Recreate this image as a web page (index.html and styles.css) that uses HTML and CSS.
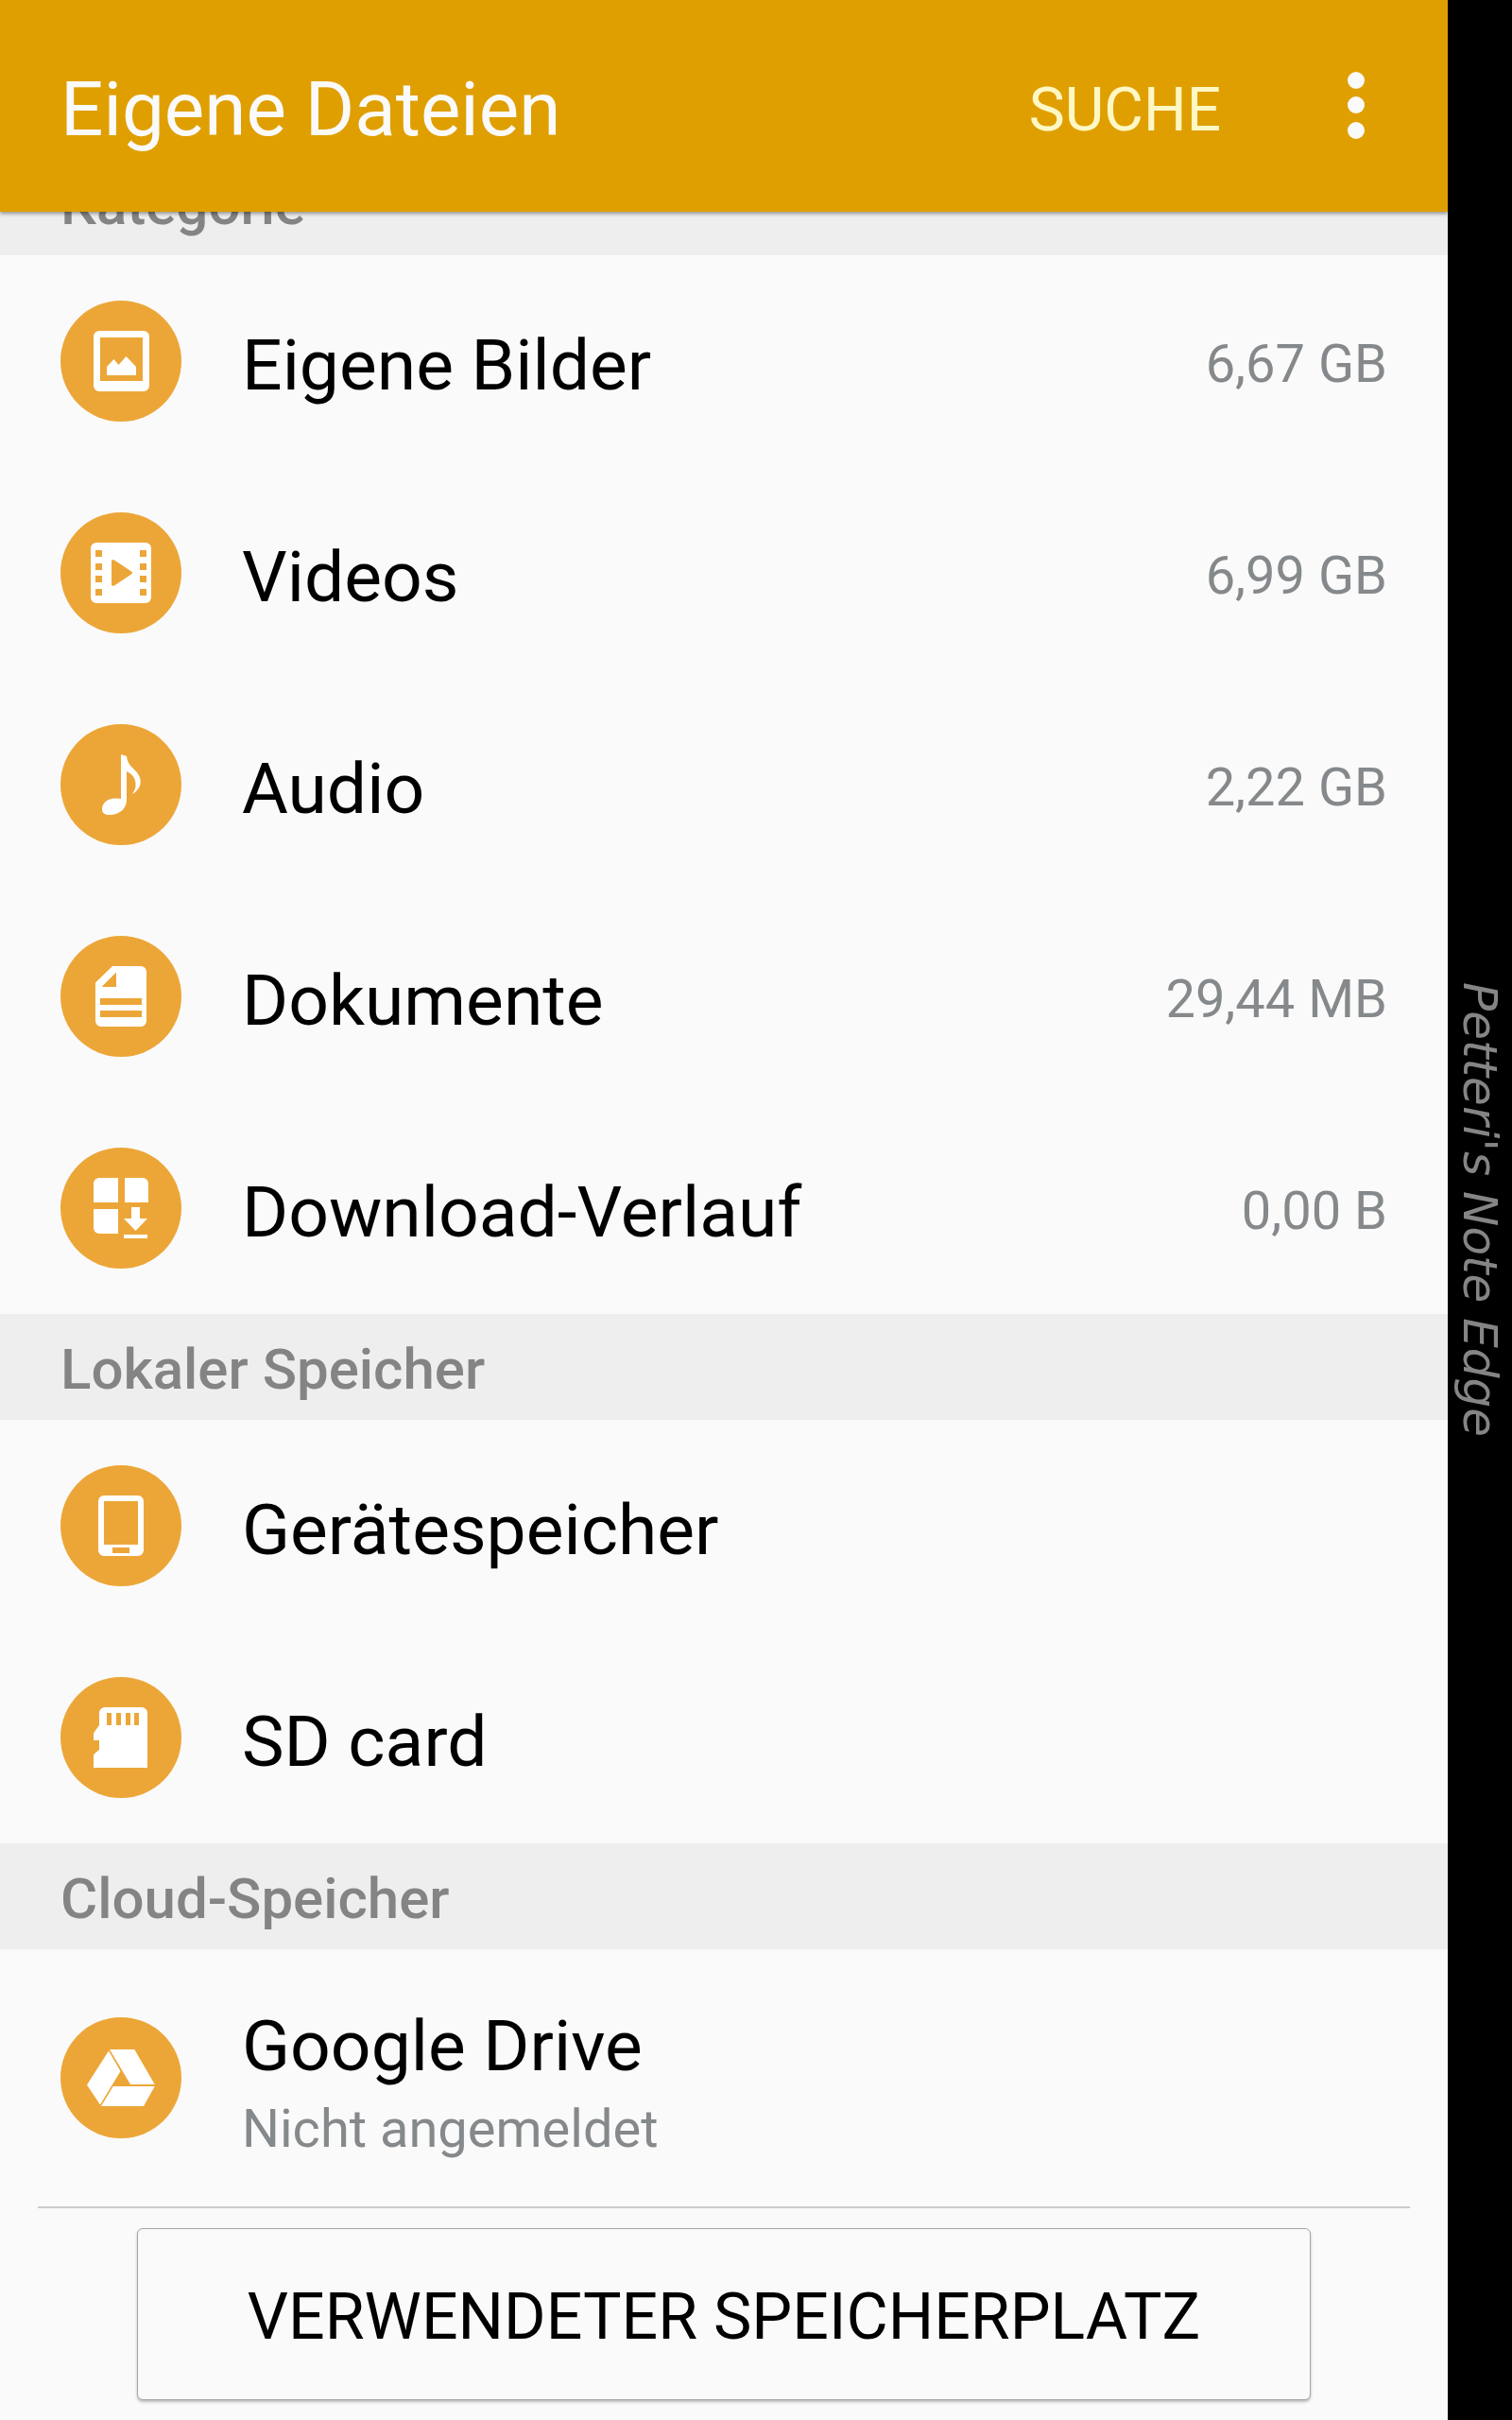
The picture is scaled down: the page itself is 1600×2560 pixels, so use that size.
FILE: index.html
```html
<!DOCTYPE html>
<html lang="de">
<head>
    <meta charset="UTF-8">
    <meta name="viewport" content="width=device-width, initial-scale=1.0">
    <title>Eigene Dateien</title>
    <link rel="stylesheet" href="styles.css">
</head>
<body>
    <div class="app">
        <header class="app-bar">
            <h1>Eigene Dateien</h1>
            <button class="search-btn" type="button">SUCHE</button>
            <button class="menu-btn" type="button" aria-label="Weitere Optionen">
                <svg width="18" height="80" viewBox="0 0 18 80" fill="#fafafa">
                    <circle cx="9" cy="9" r="9"/>
                    <circle cx="9" cy="35" r="9"/>
                    <circle cx="9" cy="62" r="9"/>
                </svg>
            </button>
        </header>

        <main>
            <section class="first-section">
                <h2>Kategorie</h2>
                <a class="row" href="#bilder">
                    <svg class="icon" viewBox="0 0 128 128">
                        <path fill-rule="evenodd" d="M41 32H88a6 6 0 0 1 6 6V90a6 6 0 0 1-6 6H41a6 6 0 0 1-6-6V38a6 6 0 0 1 6-6zM42 39V85H87V39z"/>
                        <path d="M49 79V70L56.500 62L61.500 68L69.500 59L80 70V79z"/>
                    </svg>
                    <span class="name">Eigene Bilder</span>
                    <span class="size">6,67 GB</span>
                </a>
                <a class="row" href="#videos">
                    <svg class="icon" viewBox="0 0 128 128">
                        <path fill-rule="evenodd" d="M38 32H90a6 6 0 0 1 6 6V90a6 6 0 0 1-6 6H38a6 6 0 0 1-6-6V38a6 6 0 0 1 6-6zM37 40v7h7v-7zM37 54v7h7v-7zM37 67v7h7v-7zM37 81v7h7v-7zM84 40v7h7v-7zM84 54v7h7v-7zM84 67v7h7v-7zM84 81v7h7v-7zM54 51.500V76.500Q54.500 78.500 57 77.500L75 65.500Q77 64 75 62.500L57 50.500Q54.500 49 54 51.500z"/>
                    </svg>
                    <span class="name">Videos</span>
                    <span class="size">6,99 GB</span>
                </a>
                <a class="row" href="#audio">
                    <svg class="icon" viewBox="0 0 128 128">
                        <path d="M64 32L70 34C70.500 39 72.500 43 76.500 46.500C83 52.500 84.500 56 84.700 61C84.700 67 81 71 75.500 74.500C79 70 79.800 67 79.500 62.500C79 56 75 52.500 70 50V80C70 89 63 96 52 96C47 96 44 94 44 90C44 83 51 76.500 64 79z"/>
                    </svg>
                    <span class="name">Audio</span>
                    <span class="size">2,22 GB</span>
                </a>
                <a class="row" href="#dokumente">
                    <svg class="icon" viewBox="0 0 128 128">
                        <path fill-rule="evenodd" d="M55 32H85a6 6 0 0 1 6 6V90a6 6 0 0 1-6 6H43a6 6 0 0 1-6-6V49.500zM59 38.500L43.500 54H59zM42 66V73H86V66zM42 79V86H86V79z"/>
                    </svg>
                    <span class="name">Dokumente</span>
                    <span class="size">29,44 MB</span>
                </a>
                <a class="row" href="#download">
                    <svg class="icon" viewBox="0 0 128 128">
                        <path d="M41 32H61V58H35V38a6 6 0 0 1 6-6zM68 32H87a6 6 0 0 1 6 6V58H68zM35 65H61V91H41a6 6 0 0 1-6-6z"/>
                        <path d="M75 63H84V75H92L79.500 88L67 75H75zM67 92H92V96H67z"/>
                    </svg>
                    <span class="name">Download-Verlauf</span>
                    <span class="size">0,00 B</span>
                </a>
            </section>

            <section>
                <h2>Lokaler Speicher</h2>
                <a class="row" href="#geraet">
                    <svg class="icon" viewBox="0 0 128 128">
                        <path fill-rule="evenodd" d="M46 32H82a6 6 0 0 1 6 6V90a6 6 0 0 1-6 6H46a6 6 0 0 1-6-6V38a6 6 0 0 1 6-6zM46 38V84H82V38zM55 87V93H73V87z"/>
                    </svg>
                    <span class="name">Gerätespeicher</span>
                </a>
                <a class="row" href="#sdcard">
                    <svg class="icon" viewBox="0 0 128 128">
                        <path fill-rule="evenodd" d="M47 32H86a6 6 0 0 1 6 6V96H35V82L41 77V67H35V59.500L41 51V38a6 6 0 0 1 6-6zM49 38v13h5v-13zM59 38v13h5v-13zM69 38v13h5v-13zM78 38v13h5v-13z"/>
                    </svg>
                    <span class="name">SD card</span>
                </a>
            </section>

            <section>
                <h2>Cloud-Speicher</h2>
                <a class="row row-tall" href="#drive">
                    <svg class="icon" viewBox="0 0 128 128">
                        <path d="M51 35.500L63.500 57L42 92.500L28 71.500zM52 34H78.300L99.700 71H74zM55.700 73H99.700L88 94H43z"/>
                    </svg>
                    <span class="name">Google Drive <small>Nicht angemeldet</small></span>
                </a>
            </section>
        </main>

        <footer>
            <button class="storage-btn" type="button">VERWENDETER SPEICHERPLATZ</button>
        </footer>
    </div>

    <aside class="edge">Petteri's Note Edge</aside>
</body>
</html>
```
FILE: styles.css
```css
* {
    box-sizing: border-box;
}

body {
    display: flex;
    min-height: 100vh;
    margin: 0;
    background-color: #000;
    font-family: Roboto, "Noto Sans", sans-serif;
}

button {
    padding: 0;
    border: none;
    background: none;
    font-family: inherit;
    cursor: pointer;
}

.app {
    flex: 1;
    min-width: 0;
    overflow: hidden;
    background-color: #fafafa;
}

.app-bar {
    position: relative;
    z-index: 1;
    display: flex;
    align-items: center;
    height: 224px;
    padding: 8px 88px 0 64px;
    background-color: #e09f00;
    box-shadow: 0 2px 4px rgba(0, 0, 0, 0.4);
}

h1 {
    flex: 1;
    margin: 0;
    color: #fafafa;
    font-size: 80px;
    font-weight: 400;
}

.search-btn {
    color: #fff8c5;
    font-size: 64px;
}

.menu-btn {
    display: flex;
    margin-left: 134px;
}

/* list is scrolled a little under the app bar */
.first-section {
    margin-top: -66px;
}

h2 {
    height: 112px;
    margin: 0;
    padding: 6px 64px 0;
    background-color: #eeeeee;
    color: #848484;
    font-size: 60px;
    font-weight: 500;
    line-height: 106px;
}

.row {
    display: flex;
    align-items: center;
    min-height: 224px;
    padding: 0 64px;
    color: #000;
    text-decoration: none;
}

.row-tall {
    min-height: 272px;
}

.icon {
    flex: none;
    width: 128px;
    height: 128px;
    margin-right: 64px;
    border-radius: 50%;
    background-color: #eca638;
    fill: #fff;
}

.name {
    flex: 1;
    padding-top: 8px;
    font-size: 75px;
    line-height: 100px;
}

.name small {
    display: block;
    color: #86898b;
    font-size: 56px;
    line-height: 76px;
}

.size {
    padding-top: 6px;
    color: #86898b;
    font-size: 56px;
}

footer {
    margin: 0 40px;
    padding: 21px 105px;
    border-top: 2px solid #cccccc;
}

.storage-btn {
    display: block;
    width: 100%;
    height: 182px;
    padding-top: 6px;
    border: 1px solid #a5a5a5;
    border-radius: 6px;
    background-color: #fafafa;
    box-shadow: 0 2px 3px rgba(0, 0, 0, 0.25);
    color: #000;
    font-size: 68px;
}

.edge {
    display: flex;
    align-items: center;
    justify-content: center;
    width: 68px;
    color: #858585;
    font-family: "Segoe Print", "Comic Sans MS", "DejaVu Sans", sans-serif;
    font-size: 50px;
    font-style: italic;
    font-weight: 200;
    writing-mode: vertical-rl;
}
```
